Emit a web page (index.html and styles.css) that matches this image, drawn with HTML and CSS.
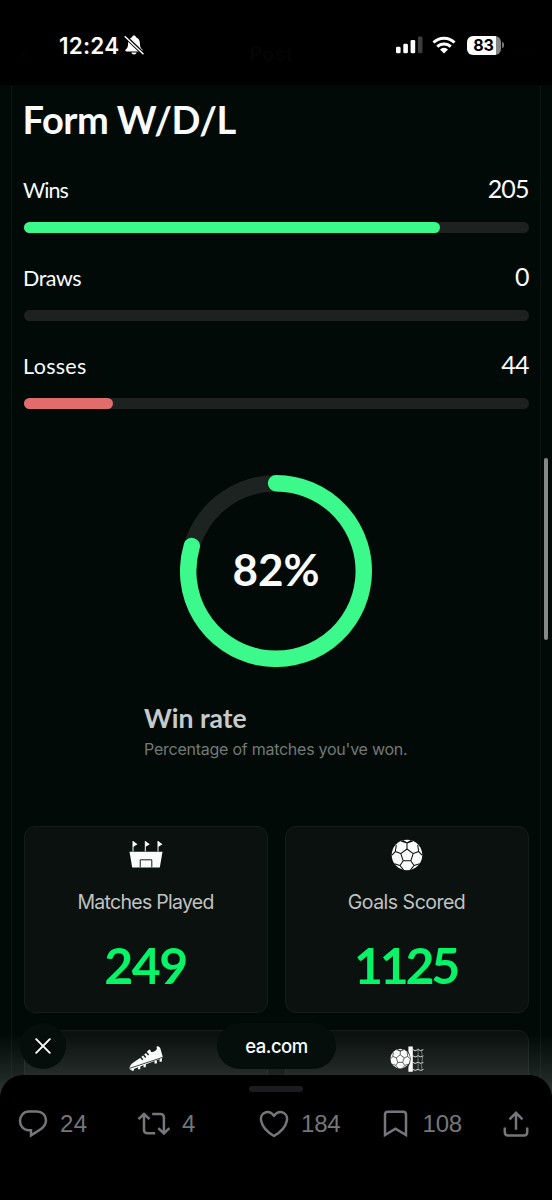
FILE: index.html
```html
<!DOCTYPE html>
<html lang="en">
<head>
<meta charset="utf-8">
<title>Form W/D/L</title>
<link rel="stylesheet" href="styles.css">
</head>
<body>
<svg width="0" height="0" class="defs">
  <defs>
    <symbol id="ball" viewBox="0 0 32 32">
      <circle cx="16" cy="16" r="15.3" fill="#fafbfb"/>
      <g fill="none" stroke="#0a110f" stroke-width="1.05" stroke-linejoin="round">
        <path d="M16 10l6.2 4.6-2.4 7.2h-7.6l-2.4-7.2zM16 10V4M22.200 14.600l5.500-2M19.800 21.800l3.200 4.700M12.200 21.800L9 26.500M9.800 14.600l-5.500-2M16 4l-4.500-2.700M16 4l4.500-2.700M10 2l6 2 6-2M27.700 12.600l-1-6.600M27.700 12.600l3.300 3.600M4.300 12.600l1-6.600M4.300 12.600L1 16.200M23 26.500l5.600-1.800M23 26.500l-3.500 4.300M9 26.500l-5.600-1.800M9 26.500l3.500 4.300"/>
      </g>
    </symbol>
  </defs>
</svg>
<main class="frame">
  <h1 class="title">Form W/D/L</h1>
  <section class="metric">
    <div class="metric-row"><span class="metric-name wins">Wins</span><span class="metric-value">205</span></div>
    <div class="track"><div class="fill good" style="width:82.4%"></div></div>
  </section>
  <section class="metric">
    <div class="metric-row"><span class="metric-name draws">Draws</span><span class="metric-value">0</span></div>
    <div class="track"></div>
  </section>
  <section class="metric">
    <div class="metric-row"><span class="metric-name losses">Losses</span><span class="metric-value">44</span></div>
    <div class="track"><div class="fill bad" style="width:17.7%"></div></div>
  </section>
  <div class="ring">
    <svg viewBox="0 0 192 192" width="192" height="192">
      <circle cx="96" cy="96" r="87.8" fill="none" stroke="#1c2321" stroke-width="16.400"/>
      <path d="M96 8.200A87.800 87.800 0 1 1 11.800 71" fill="none" stroke="#3bf98a" stroke-width="16.400" stroke-linecap="round"/>
    </svg>
    <span class="ring-value">82%</span>
  </div>
  <div class="caption">
    <h2 class="caption-title">Win rate</h2>
    <p class="caption-text">Percentage of matches you've won.</p>
  </div>
  <div class="cards">
    <article class="card">
      <svg class="card-icon" width="34" height="32" viewBox="0 0 34 32">
        <path d="M.5 12.800h33L30.800 28.500H3.200z" fill="#fafbfb"/>
        <path d="M11.200 28.500v-7.700h11.600v7.700" fill="none" stroke="#141a18" stroke-width="1"/>
        <path d="M4 12.500V2M16.300 12.500V2M29 12.500V2" stroke="#fafbfb" stroke-width="1"/>
        <path d="M4 2l4.500 3.200L4 8zM16.300 2l4.500 3.200-4.500 2.800zM29 2l4.500 3.200L29 8z" fill="#fafbfb"/>
      </svg>
      <p class="card-label matches">Matches Played</p>
      <strong class="card-value played">249</strong>
    </article>
    <article class="card">
      <svg class="card-icon" width="32" height="32"><use href="#ball"/></svg>
      <p class="card-label goals">Goals Scored</p>
      <strong class="card-value scored">1125</strong>
    </article>
    <article class="card">
      <svg class="card-icon" width="34" height="32" viewBox="0 0 34 32">
        <path d="M.6 25.500c0-2.500 1.300-4.500 3.800-6.100l6.300-4.100 3-2.500 3.300-2.800c1.500-1.400 2.100-3 3.800-3.400.9.200.6 1.900 1.400 2.300 1.800.6 5.200-1.100 5.700-3.100 0-1.300-1-2.100.2-2.500 1.400-.3 2.500.7 3.200 2l2.300 7.900c0 1.200-.4 1.800-1.400 2.200L3.300 26.600c-1.500.4-2.700 0-2.700-1.100z" fill="#fafbfb"/>
        <path d="M1 25.200l32-10.600" stroke="#1a201e" stroke-width=".9"/>
        <path d="M10.500 13l3.300 3.700M13.600 10.800l3.200 3.700M16.500 8.500l3.100 3.600" stroke="#101816" stroke-width="1.500"/>
        <path d="M2.500 25.800v2h2.300l.4-2.500M9 23.500v2.700h2.200l.3-3.400M14.500 21.700v2.500h2.200l.3-3.200M25.500 18v2.500h2.300l.2-3.200M30.500 16.300v2.400h2.300l.2-3.600" fill="#fafbfb"/>
      </svg>
    </article>
    <article class="card">
      <svg class="card-icon" width="34" height="32" viewBox="0 0 34 32">
        <use href="#ball" x="0" y="5.400" width="20.500" height="20.500"/>
        <path d="M18.400 3.500h4.400v25.300h-4.400v-5q4.600-7.700 0-15.300z" fill="#fff"/>
        <path d="M22.800 6.500q2 2.600 5.300 0 2.500 2.300 5.300.2M22.800 12.700q2 2.600 5.300 0 2.500 2.300 5.300.2M22.800 19.200q2 2.600 5.300 0 2.500 2.300 5.300.2M22.800 26.300q2 2.300 5.300 0 2.500 2.200 5.300.2" stroke="#d5d8d6" stroke-width="1" fill="none"/>
        <path d="M28.100 5.500v22M32 6q-1 2 0 5.500t0 7 0 8" stroke="#8d918f" stroke-width=".7" fill="none"/>
      </svg>
    </article>
  </div>
</main>
<header class="status">
  <div class="ghost"><span>‹</span><b>Post</b><span>···</span></div>
  <div class="status-row">
    <span class="clock">12:24</span>
    <svg class="bell" width="20" height="20" viewBox="0 0 20 20">
      <path d="M10 .6c1.100 0 1.800.7 2 1.700 2.500.9 3.900 3 3.900 6 0 3.700.8 4.900 2.400 6.300.8.900.4 1.800-.9 1.800H2.600c-1.300 0-1.700-.9-.9-1.800 1.600-1.400 2.400-2.600 2.400-6.300 0-3 1.400-5.100 3.900-6 .2-1 .9-1.700 2-1.700zM7.400 17.400h5.200c-.2 1.300-1.300 2-2.600 2s-2.400-.7-2.600-2z" fill="#fff"/>
      <path d="M1.300 1.500l17.800 17.200" stroke="#000" stroke-width="3.600"/><path d="M1.200 1.800l17.800 16.900" stroke="#fff" stroke-width="1.500" stroke-linecap="round"/>
    </svg>
    <svg class="signal" width="28" height="18" viewBox="0 0 28 18">
      <g fill="#fff"><rect x="0" y="10.800" width="4.600" height="6.500" rx="1.300"/><rect x="7.300" y="7.700" width="4.600" height="9.600" rx="1.300"/><rect x="14.600" y="4" width="4.600" height="13.300" rx="1.300"/></g>
      <rect x="21.900" y=".4" width="4.600" height="16.900" rx="1.300" fill="#3c3c3c"/>
    </svg>
    <svg class="wifi" width="24" height="18" viewBox="0 0 24 18">
      <g fill="none" stroke="#fff" stroke-width="3"><path d="M1.500 6.500a14.800 14.800 0 0 1 21 0"/><path d="M5.300 10.700a9.600 9.600 0 0 1 13.400 0"/></g>
      <path d="M8 13.500a5.700 5.700 0 0 1 8 0L12 17.500z" fill="#fff"/>
    </svg>
    <div class="battery"><span>83</span></div>
    <i class="nub"></i>
  </div>
</header>
<div class="scrollbar"></div>
<div class="fade"></div>
<div class="browser-bar">
  <button class="close"><svg width="16" height="16" viewBox="0 0 16 16"><path d="M1.200 1.200l13.600 13.600M14.800 1.200L1.200 14.800" stroke="#fff" stroke-width="1.900" stroke-linecap="round"/></svg></button>
  <div class="address">ea.com</div>
</div>
<footer class="sheet">
  <div class="grip"></div>
  <div class="actions">
    <svg class="reply" width="30" height="30" viewBox="0 0 30 30"><path d="M10.700 2.400h8.200c5 0 9.100 3.900 9.100 8.900 0 4.700-2.500 7.300-6.500 9.700l-8.500 5.400v-5.200h-2.300C5.600 21.200 2 17.100 2 12c0-5.200 3.800-9.600 8.700-9.600z" fill="none" stroke="#75767a" stroke-width="2.500"/></svg>
    <span class="count n-reply">24</span>
    <svg class="repost" width="34" height="26" viewBox="0 0 34 26"><g fill="none" stroke="#75767a" stroke-width="2.500"><path d="M1.500 8.200L7 3l5.500 5.200M7 3.300v15.500c0 2.100 1.500 3.500 3.500 3.500h7.700M15.200 3h8c2.200 0 3.700 1.400 3.700 3.500v15.700M21.300 17.200l5.600 5.300 5.500-5.300"/></g></svg>
    <span class="count n-repost">4</span>
    <svg class="heart" width="30" height="28" viewBox="0 0 30 28"><path d="M15 5.900C12.800 2.600 9.900 1.400 7 2.200 3.200 3.200 1.300 6.900 2.200 11c1.300 6 6.200 11.200 12.800 15 6.600-3.800 11.500-9 12.800-15 .9-4.100-1-7.800-4.800-8.800-2.900-.8-5.800.4-8 3.700z" fill="none" stroke="#75767a" stroke-width="2.500" stroke-linejoin="round"/></svg>
    <span class="count n-like">184</span>
    <svg class="save" width="25" height="28" viewBox="0 0 25 28"><path d="M2 25V4.500Q2 1.700 4.800 1.700h15.400Q23 1.700 23 4.500V25l-10.500-6.300z" fill="none" stroke="#75767a" stroke-width="2.500"/></svg>
    <span class="count n-save">108</span>
    <svg class="share" width="26" height="28" viewBox="0 0 26 28"><path d="M13 19.800V3.400M6.500 9.300L13 2.800l6.500 6.500M1.800 17.500v4.700c0 2 1.200 3.200 3.200 3.200h16c2 0 3.200-1.200 3.200-3.200v-4.700" fill="none" stroke="#75767a" stroke-width="2.500"/></svg>
  </div>
</footer>
</body>
</html>
```
FILE: styles.css
```css
* { box-sizing: border-box; }
body { margin: 0; width: 552px; height: 1200px; overflow: hidden; position: relative; background: #010a07; color: #fafbfb; font-family: Lato, "Liberation Sans", sans-serif; }
h1, h2, p { margin: 0; white-space: nowrap; }
.defs { position: absolute; }
.frame { width: 529.500px; height: 1200px; margin-left: 11.300px; padding: 85px 11.300px 0; border: solid #0c1512; border-width: 0 1px; overflow: hidden; }
.title { height: 72px; line-height: 69px; font-size: 38px; font-weight: 700; letter-spacing: -.5px; margin-left: -1px; }
.metric { height: 88px; }
.metric-row { height: 65px; display: flex; justify-content: space-between; align-items: center; }
.metric-name { font-size: 21.500px; margin-left: -.5px; }
.wins { letter-spacing: -1px; }
.draws { letter-spacing: -.5px; }
.losses { letter-spacing: .3px; }
.metric-value { font-size: 25px; letter-spacing: -.9px; margin-right: 0; padding-bottom: 3px; }
.track { height: 11px; border-radius: 6px; background: #1d2221; }
.fill { height: 11px; border-radius: 6px; }
.good { background: #3bf98a; }
.bad { background: #e06c6c; }
.ring { width: 192px; height: 192px; margin: 53.500px auto 0; display: grid; place-items: center; }
.ring svg, .ring-value { grid-area: 1 / 1; }
.ring-value { font-size: 44px; font-weight: 700; letter-spacing: 0; padding-bottom: 3px; }
.caption { width: 264px; margin: 34px auto 0; height: 125.500px; }
.caption-title { height: 34px; line-height: 34px; font-size: 26.500px; font-weight: 700; color: #c7cac9; }
.caption-text { height: 28px; font: 16px/28px Inter, sans-serif; letter-spacing: -.25px; color: #747977; }
.cards { display: grid; grid-template-columns: 1fr 1fr; gap: 17px; }
.card { height: 187px; border: 1.500px solid #151c19; border-radius: 11px; background: #0a110f; padding-top: 12px; display: flex; flex-direction: column; align-items: center; }
.card-label { height: 30px; margin-top: 15.500px; font: 19.500px/30px Inter, sans-serif; color: #c0c3c2; }
.matches { letter-spacing: -.72px; }
.goals { letter-spacing: -.5px; }
.card-value { height: 60px; margin-top: 18px; font-size: 50px; line-height: 60px; font-weight: 700; color: #07f468; }
.played { letter-spacing: -1.400px; }
.scored { letter-spacing: -3.200px; padding-right: 2px; }
.status { position: absolute; inset: 0 0 auto; height: 85px; background: #000; }
.ghost { position: absolute; inset: 40px 20px auto; display: flex; justify-content: space-between; font: 20px/28px Inter, sans-serif; color: #040404; }
.status-row { position: relative; display: flex; align-items: center; height: 90px; padding-left: 59px; }
.clock { width: 60px; font: 600 22.500px Inter, sans-serif; letter-spacing: .2px; white-space: nowrap; }
.bell { margin-left: 5px; }
.signal { margin-left: 252px; }
.wifi { margin-left: 8px; }
.battery { width: 34px; height: 19px; margin-left: 10.500px; border-radius: 6px; background: linear-gradient(90deg, #fff 29px, #858585 29px); color: #000; font: 700 16px/19px Inter, sans-serif; text-align: center; }
.nub { width: 2px; height: 6px; margin-left: 1px; border-radius: 0 2px 2px 0; background: #777; }
.scrollbar { position: absolute; left: 543.500px; top: 458px; width: 4.500px; height: 182px; border-radius: 3px; background: #858987; }
.fade { position: absolute; inset: 1034px 0 auto; height: 66px; background: linear-gradient(rgba(255,255,255,0), rgba(255,255,255,.11) 62%, rgba(255,255,255,.2)); }
.browser-bar { position: absolute; left: 20px; top: 1023px; display: flex; align-items: center; }
.close { width: 46px; height: 46px; border: 0; padding: 0; border-radius: 50%; background: #050e0b; display: grid; place-items: center; }
.address { width: 119px; height: 46px; margin-left: 151px; border-radius: 23px; background: #050e0b; text-align: center; font: 500 18.500px/47px Inter, sans-serif; letter-spacing: -.5px; }
.sheet { position: absolute; inset: 1075px 0 0; border-radius: 23px 23px 0 0; background: #000; }
.grip { width: 54px; height: 6px; margin: 11px auto 0; border-radius: 3px; background: #1c1c1f; }
.actions { display: flex; align-items: center; height: 63px; padding-left: 18px; }
.count { font: 24px/30px "Liberation Sans", sans-serif; color: #75767a; letter-spacing: -.2px; }
.n-reply { width: 62px; margin-left: 12px; letter-spacing: .5px; }
.repost { margin-left: 15px; }
.n-repost { width: 62px; margin-left: 11px; }
.heart { margin-left: 15px; }
.n-like { width: 62px; margin-left: 12px; }
.save { margin-left: 19.500px; }
.n-save { width: 62px; margin-left: 15px; }
.share { margin-left: 18.500px; }
```
